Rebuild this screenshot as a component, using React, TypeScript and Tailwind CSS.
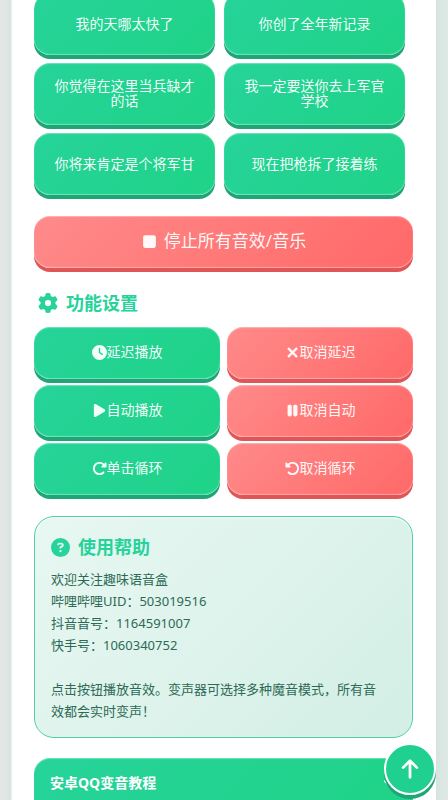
import React from 'react';
import type { IconType } from 'react-icons';
import {
  FaArrowUp,
  FaChevronDown,
  FaCircleQuestion,
  FaClock,
  FaGear,
  FaPause,
  FaPlay,
  FaRotateLeft,
  FaRotateRight,
  FaStop,
  FaXmark,
} from 'react-icons/fa6';

const sounds = [
  '我的天哪太快了',
  '你创了全年新记录',
  '你觉得在这里当兵缺才的话',
  '我一定要送你去上军官学校',
  '你将来肯定是个将军甘',
  '现在把枪拆了接着练',
];

type Tone = 'green' | 'red';

const settings: { label: string; icon: IconType; tone: Tone; iconClass: string }[] = [
  { label: '延迟播放', icon: FaClock, tone: 'green', iconClass: 'h-[15px]' },
  { label: '取消延迟', icon: FaXmark, tone: 'red', iconClass: 'h-[15px] stroke-[24]' },
  { label: '自动播放', icon: FaPlay, tone: 'green', iconClass: 'h-[15px]' },
  { label: '取消自动', icon: FaPause, tone: 'red', iconClass: 'h-[15px] stroke-[16]' },
  { label: '单击循环', icon: FaRotateRight, tone: 'green', iconClass: 'h-[15px]' },
  { label: '取消循环', icon: FaRotateLeft, tone: 'red', iconClass: 'h-[15px]' },
];

const tones: Record<Tone, string> = {
  green:
    'bg-linear-135 from-[#26d39a] to-[#1fd387] shadow-[0_4px_0_#1fa577,inset_0_1px_1px_rgba(255,255,255,0.35),inset_0_-1px_1px_rgba(255,255,255,0.35)]',
  red:
    'bg-linear-135 from-[#ff8a8a] to-[#ff6868] shadow-[0_4px_0_#e05656,inset_0_1px_1px_rgba(255,255,255,0.35),inset_0_-1px_1px_rgba(255,255,255,0.35)]',
};

const PushButton: React.FC<{ tone: Tone; className: string; children: React.ReactNode }> = ({
  tone,
  className,
  children,
}) => (
  <button
    type="button"
    className={`flex items-center justify-center rounded-2xl text-white/95 cursor-pointer active:translate-y-0.5 ${tones[tone]} ${className}`}
  >
    {children}
  </button>
);

export default function App() {
  return (
    <div className="h-screen overflow-hidden bg-linear-to-r from-[#e2e7e5] to-[#dde8e5] font-['Noto_Sans','Noto_Sans_CJK_SC',sans-serif]">
      <main
        lang="zh-CN"
        className="ml-[11px] mr-3 min-h-screen bg-white border-l border-[#e2f6ef] pl-[22px] pr-[23px] shadow-[0_0_8px_rgba(32,120,90,0.08)]"
      >
        <section className="grid grid-cols-2 gap-x-[9px] gap-y-2 pr-2 -mt-[7px]" aria-label="音效">
          {sounds.map(name => (
            <PushButton key={name} tone="green" className="h-[62px] px-4 pb-0.5 text-sm leading-[15px]">
              {name}
            </PushButton>
          ))}
        </section>

        <PushButton tone="red" className="mt-[21px] h-[52px] w-full gap-1.5 pb-0.5 text-[17px]">
          <FaStop className="size-[17px]" />
          停止所有音效/音乐
        </PushButton>

        <section>
          <h2 className="mt-[21px] mb-[10px] flex h-7 items-center gap-2 pl-1 text-lg font-bold text-[#26d39a]">
            <FaGear className="size-5" />
            功能设置
          </h2>
          <div className="grid grid-cols-2 gap-x-[7px] gap-y-1.5">
            {settings.map(({ label, icon: Icon, tone, iconClass }) => (
              <PushButton key={label} tone={tone} className="h-[52px] pb-0.5 text-sm">
                <Icon className={`w-auto overflow-visible ${iconClass}`} />
                {label}
              </PushButton>
            ))}
          </div>
        </section>

        <section className="mt-[21px] rounded-[20px] border border-[#4fcfa2] bg-linear-135 from-[#e8f7f2] to-[#d3efe5] pt-4 pb-[15px] pl-4 pr-7 shadow-[inset_0_1px_2px_rgba(255,255,255,0.8)]">
          <h2 className="mb-[7px] flex h-7 items-center gap-2 text-lg font-bold text-[#26d39a]">
            <FaCircleQuestion className="size-[19px]" />
            使用帮助
          </h2>
          <p className="text-[13px] leading-[22px] text-[#2d6a55]">
            欢迎关注趣味语音盒
            <br />
            哔哩哔哩UID：503019516
            <br />
            抖音音号：1164591007
            <br />
            快手号：1060340752
            <br />
            <br />
            点击按钮播放音效。变声器可选择多种魔音模式，所有音效都会实时变声！
          </p>
        </section>

        <button
          type="button"
          className="mt-5 flex h-[50px] w-full items-center justify-between rounded-t-2xl bg-linear-135 from-[#26d39a] to-[#1fd387] px-4 text-sm font-bold text-white shadow-[inset_0_1px_1px_rgba(255,255,255,0.35)]"
        >
          安卓QQ变音教程
          <FaChevronDown />
        </button>
      </main>

      <button
        type="button"
        aria-label="返回顶部"
        className="fixed right-3 bottom-[5px] flex size-[52px] items-center justify-center rounded-full border-2 border-white bg-[#20d090] text-[22px] text-white shadow-[0_4px_0_#1fa577]"
      >
        <FaArrowUp />
      </button>
    </div>
  );
}
